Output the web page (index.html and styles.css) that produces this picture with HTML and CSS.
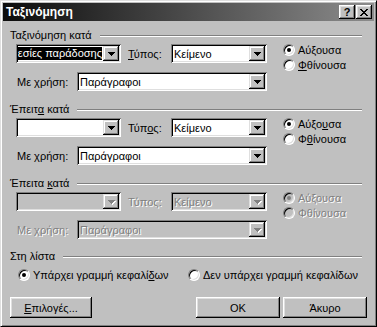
FILE: index.html
```html
<!DOCTYPE html>
<html lang="el">
<head>
    <meta charset="UTF-8">
    <title>Ταξινόμηση</title>
    <link rel="stylesheet" href="styles.css">
</head>
<body>
    <div class="window">
        <div class="titlebar">
            <span class="title">Ταξινόμηση</span>
            <div class="title-buttons">
                <span class="tbtn help">?</span>
                <span class="tbtn">
                    <svg width="8" height="7" viewBox="0 0 8 7" shape-rendering="crispEdges"><path d="M0 0h2v1h1v1h2v-1h1v-1h2v1h-1v1h-1v1h-1v1h1v1h1v1h1v1h-2v-1h-1v-1h-2v1h-1v1h-2v-1h1v-1h1v-1h1v-1h-1v-1h-1z"/></svg>
                </span>
            </div>
        </div>

        <div class="content">
            <!-- first key -->
            <section class="group">
                <div class="group-head"><span>Ταξινόμηση κατά</span><i class="etch"></i></div>
                <div class="group-body">
                    <div class="fields">
                        <div class="row">
                            <div class="combo combo-key">
                                <div class="combo-field scrolled"><span class="sel">Υπηρεσίες παράδοσης</span></div>
                                <span class="combo-btn"><svg width="7" height="4" viewBox="0 0 7 4" shape-rendering="crispEdges"><path d="M0 0h7v1h-1v1h-1v1h-1v1h-1v-1h-1v-1h-1v-1h-1z"/></svg></span>
                            </div>
                            <span class="lbl type-lbl"><u>Τ</u>ύπος:</span>
                            <div class="combo combo-type">
                                <div class="combo-field">Κείμενο</div>
                                <span class="combo-btn"><svg width="7" height="4" viewBox="0 0 7 4" shape-rendering="crispEdges"><path d="M0 0h7v1h-1v1h-1v1h-1v1h-1v-1h-1v-1h-1v-1h-1z"/></svg></span>
                            </div>
                        </div>
                        <div class="row indent">
                            <span class="lbl use-lbl">Με χρήση:</span>
                            <div class="combo combo-use">
                                <div class="combo-field">Παράγραφοι</div>
                                <span class="combo-btn"><svg width="7" height="4" viewBox="0 0 7 4" shape-rendering="crispEdges"><path d="M0 0h7v1h-1v1h-1v1h-1v1h-1v-1h-1v-1h-1v-1h-1z"/></svg></span>
                            </div>
                        </div>
                    </div>
                    <div class="radios">
                        <div class="radio checked"><span class="circle"></span>Αύξουσα</div>
                        <div class="radio"><span class="circle"></span><u>Φ</u>θίνουσα</div>
                    </div>
                </div>
            </section>

            <!-- second key -->
            <section class="group">
                <div class="group-head"><span>Έπειτ<u>α</u> κατά</span><i class="etch"></i></div>
                <div class="group-body">
                    <div class="fields">
                        <div class="row">
                            <div class="combo combo-key">
                                <div class="combo-field"></div>
                                <span class="combo-btn"><svg width="7" height="4" viewBox="0 0 7 4" shape-rendering="crispEdges"><path d="M0 0h7v1h-1v1h-1v1h-1v1h-1v-1h-1v-1h-1v-1h-1z"/></svg></span>
                            </div>
                            <span class="lbl type-lbl">Τύπ<u>ο</u>ς:</span>
                            <div class="combo combo-type">
                                <div class="combo-field">Κείμενο</div>
                                <span class="combo-btn"><svg width="7" height="4" viewBox="0 0 7 4" shape-rendering="crispEdges"><path d="M0 0h7v1h-1v1h-1v1h-1v1h-1v-1h-1v-1h-1v-1h-1z"/></svg></span>
                            </div>
                        </div>
                        <div class="row indent">
                            <span class="lbl use-lbl">Με χρήση:</span>
                            <div class="combo combo-use">
                                <div class="combo-field">Παράγραφοι</div>
                                <span class="combo-btn"><svg width="7" height="4" viewBox="0 0 7 4" shape-rendering="crispEdges"><path d="M0 0h7v1h-1v1h-1v1h-1v1h-1v-1h-1v-1h-1v-1h-1z"/></svg></span>
                            </div>
                        </div>
                    </div>
                    <div class="radios">
                        <div class="radio checked"><span class="circle"></span>Αύξο<u>υ</u>σα</div>
                        <div class="radio"><span class="circle"></span>Φ<u>θ</u>ίνουσα</div>
                    </div>
                </div>
            </section>

            <!-- third key, disabled -->
            <section class="group disabled">
                <div class="group-head"><span>Έπειτα <u>κ</u>ατά</span><i class="etch"></i></div>
                <div class="group-body">
                    <div class="fields">
                        <div class="row">
                            <div class="combo combo-key">
                                <div class="combo-field"></div>
                                <span class="combo-btn"><svg width="7" height="4" viewBox="0 0 7 4" shape-rendering="crispEdges"><path d="M0 0h7v1h-1v1h-1v1h-1v1h-1v-1h-1v-1h-1v-1h-1z"/></svg></span>
                            </div>
                            <span class="lbl type-lbl">Τύπος:</span>
                            <div class="combo combo-type">
                                <div class="combo-field">Κείμενο</div>
                                <span class="combo-btn"><svg width="7" height="4" viewBox="0 0 7 4" shape-rendering="crispEdges"><path d="M0 0h7v1h-1v1h-1v1h-1v1h-1v-1h-1v-1h-1v-1h-1z"/></svg></span>
                            </div>
                        </div>
                        <div class="row indent">
                            <span class="lbl use-lbl">Με χρήση:</span>
                            <div class="combo combo-use">
                                <div class="combo-field">Παράγραφοι</div>
                                <span class="combo-btn"><svg width="7" height="4" viewBox="0 0 7 4" shape-rendering="crispEdges"><path d="M0 0h7v1h-1v1h-1v1h-1v1h-1v-1h-1v-1h-1v-1h-1z"/></svg></span>
                            </div>
                        </div>
                    </div>
                    <div class="radios">
                        <div class="radio checked"><span class="circle"></span>Αύξουσα</div>
                        <div class="radio"><span class="circle"></span>Φθίνουσα</div>
                    </div>
                </div>
            </section>

            <section class="list-group">
                <div class="group-head"><span>Στη λίστα</span><i class="etch"></i></div>
                <div class="list-radios">
                    <div class="radio checked first"><span class="circle"></span>Υπάρχει γραμμή κεφαλί<u>δ</u>ων</div>
                    <div class="radio"><span class="circle"></span>Δεν υπάρ<u>χ</u>ει γραμμή κεφαλίδων</div>
                </div>
            </section>

            <div class="buttons">
                <button class="btn options"><u>Ε</u>πιλογές...</button>
                <button class="btn ok">OK</button>
                <button class="btn">Άκυρο</button>
            </div>
        </div>
    </div>
</body>
</html>
```

FILE: styles.css
```css
body {
    margin: 0;
    background: #c0c0c0;
    font-family: "Liberation Sans", Arial, sans-serif;
    font-size: 11px;
    color: #000;
}

.window {
    width: 377px;
    height: 327px;
    box-sizing: border-box;
    background: #c0c0c0;
    border: 1px solid;
    border-color: #dfdfdf #000 #000 #dfdfdf;
    padding: 2px;
    box-shadow: inset 1px 1px #fff, inset -1px -1px #808080;
}

/* title bar */

.titlebar {
    height: 18px;
    display: flex;
    align-items: center;
    justify-content: space-between;
    padding: 0 2px 0 3px;
    background: linear-gradient(to right, #0c0c0c, #8c8c8c);
}

.title {
    color: #fff;
    font-weight: bold;
    font-size: 12px;
}

.title-buttons {
    display: flex;
    gap: 1px;
}

.tbtn {
    width: 16px;
    height: 14px;
    box-sizing: border-box;
    display: flex;
    align-items: center;
    justify-content: center;
    background: #c0c0c0;
    box-shadow: inset -1px -1px #000, inset 1px 1px #fff, inset -2px -2px #808080, inset 2px 2px #dfdfdf;
}

.tbtn.help {
    font-weight: bold;
    font-size: 11px;
    line-height: 14px;
}

/* body */

.content {
    padding: 8px 7px 0;
}

.group {
    margin-bottom: 12px;
}

.group-head {
    display: flex;
    align-items: center;
    height: 13px;
    line-height: 13px;
}

.etch {
    flex: 1;
    height: 0;
    border-top: 1px solid #808080;
    border-bottom: 1px solid #fff;
    margin: 0 5px 0 8px;
}

.group-body {
    display: flex;
}

.fields {
    padding: 2px 0 0 6px;
    display: flex;
    flex-direction: column;
    gap: 9px;
}

.row {
    display: flex;
    align-items: center;
    height: 19px;
}

.row.indent {
    padding-left: 1px;
}

.lbl {
    white-space: nowrap;
}

.type-lbl {
    width: 43px;
    margin-left: 7px;
}

.use-lbl {
    width: 60px;
}

/* combo box */

.combo {
    height: 19px;
    box-sizing: border-box;
    display: flex;
    padding: 2px;
    background: #fff;
    box-shadow: inset 1px 1px #808080, inset -1px -1px #fff, inset 2px 2px #000, inset -2px -2px #dfdfdf;
}

.combo-key {
    width: 105px;
}

.combo-type {
    width: 96px;
}

.combo-use {
    width: 190px;
}

.combo-field {
    flex: 1;
    display: flex;
    align-items: center;
    padding-left: 1px;
    overflow: hidden;
    white-space: nowrap;
}

.combo-field.scrolled {
    justify-content: flex-end;
    padding-left: 0;
    margin-right: 1px;
}

.sel {
    background: #000;
    color: #fff;
    line-height: 13px;
    flex-shrink: 0;
}

.combo-btn {
    width: 16px;
    display: flex;
    align-items: center;
    justify-content: center;
    background: #c0c0c0;
    box-shadow: inset -1px -1px #000, inset 1px 1px #dfdfdf, inset -2px -2px #808080, inset 2px 2px #fff;
}

/* radio buttons */

.radios {
    margin-left: 16px;
    display: flex;
    flex-direction: column;
}

.radio {
    height: 15px;
    display: flex;
    align-items: center;
    white-space: nowrap;
}

.circle {
    position: relative;
    width: 12px;
    height: 12px;
    box-sizing: border-box;
    margin-right: 3px;
    border-radius: 50%;
    border: 1px solid;
    border-color: #808080 #fff #fff #808080;
    background: #fff;
    box-shadow: inset 1px 1px #000, inset -1px -1px #dfdfdf;
}

.radio.checked .circle::after {
    content: "";
    position: absolute;
    left: 3px;
    top: 3px;
    width: 4px;
    height: 4px;
    border-radius: 50%;
    background: #000;
}

/* disabled group */

.disabled .fields .lbl,
.disabled .combo-field,
.disabled .radio {
    color: #808080;
    text-shadow: 1px 1px #fff;
}

.disabled .combo {
    background: #c0c0c0;
}

.disabled .combo-btn svg {
    fill: #808080;
    filter: drop-shadow(1px 1px 0 #fff);
}

.disabled .circle {
    background: #c0c0c0;
}

.disabled .radio.checked .circle::after {
    background: #808080;
}

/* list header */

.list-group {
    margin-top: -1px;
}

.list-radios {
    display: flex;
    margin-top: 4px;
    padding-left: 8px;
}

.list-radios .radio.first {
    width: 170px;
}

/* buttons */

.buttons {
    display: flex;
    gap: 3px;
    margin-top: 15px;
}

.btn {
    width: 84px;
    height: 21px;
    padding: 0;
    border: none;
    background: #c0c0c0;
    font-family: inherit;
    font-size: 11px;
    color: #000;
    box-shadow: inset -1px -1px #000, inset 1px 1px #fff, inset -2px -2px #808080, inset 2px 2px #dfdfdf;
}

.btn.options {
    width: 82px;
    margin-right: auto;
}
```
